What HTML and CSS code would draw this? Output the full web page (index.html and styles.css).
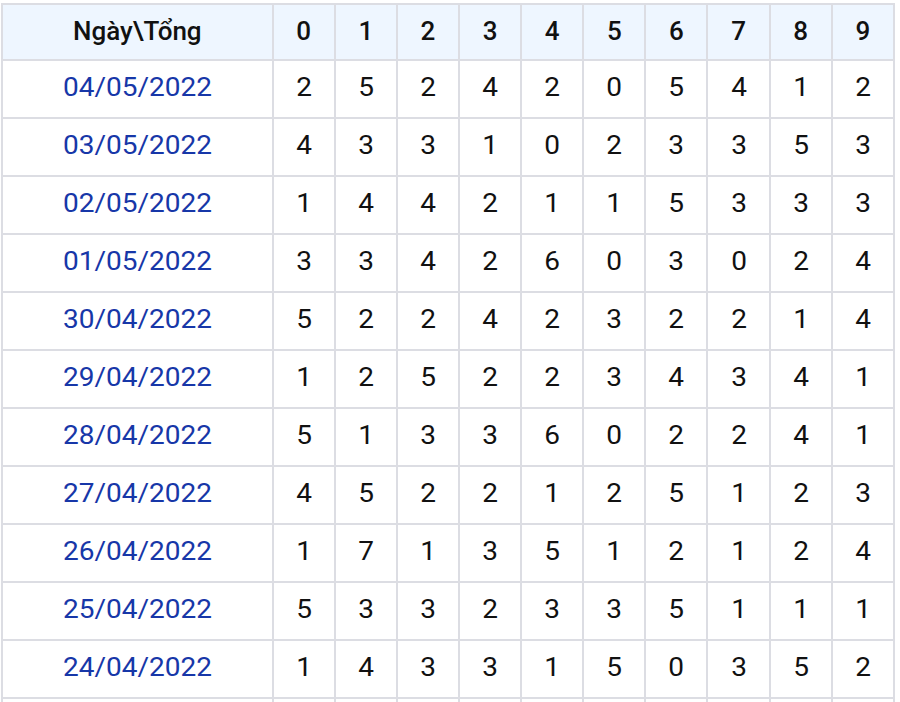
FILE: index.html
```html
<!DOCTYPE html>
<html>
<head>
<meta charset="utf-8">
<link rel="stylesheet" href="styles.css">
</head>
<body>
<table class="stats">
<colgroup><col class="c-date"><col span="10" class="c-num"></colgroup>
<thead>
<tr><th><span class="t">Ngày\Tổng</span></th><th><span class="t">0</span></th><th><span class="t">1</span></th><th><span class="t">2</span></th><th><span class="t">3</span></th><th><span class="t">4</span></th><th><span class="t">5</span></th><th><span class="t">6</span></th><th><span class="t">7</span></th><th><span class="t">8</span></th><th><span class="t">9</span></th></tr>
</thead>
<tbody>
<tr><td class="date"><span class="t">04/05/2022</span></td><td><span class="t">2</span></td><td><span class="t">5</span></td><td><span class="t">2</span></td><td><span class="t">4</span></td><td><span class="t">2</span></td><td><span class="t">0</span></td><td><span class="t">5</span></td><td><span class="t">4</span></td><td><span class="t">1</span></td><td><span class="t">2</span></td></tr>
<tr><td class="date"><span class="t">03/05/2022</span></td><td><span class="t">4</span></td><td><span class="t">3</span></td><td><span class="t">3</span></td><td><span class="t">1</span></td><td><span class="t">0</span></td><td><span class="t">2</span></td><td><span class="t">3</span></td><td><span class="t">3</span></td><td><span class="t">5</span></td><td><span class="t">3</span></td></tr>
<tr><td class="date"><span class="t">02/05/2022</span></td><td><span class="t">1</span></td><td><span class="t">4</span></td><td><span class="t">4</span></td><td><span class="t">2</span></td><td><span class="t">1</span></td><td><span class="t">1</span></td><td><span class="t">5</span></td><td><span class="t">3</span></td><td><span class="t">3</span></td><td><span class="t">3</span></td></tr>
<tr><td class="date"><span class="t">01/05/2022</span></td><td><span class="t">3</span></td><td><span class="t">3</span></td><td><span class="t">4</span></td><td><span class="t">2</span></td><td><span class="t">6</span></td><td><span class="t">0</span></td><td><span class="t">3</span></td><td><span class="t">0</span></td><td><span class="t">2</span></td><td><span class="t">4</span></td></tr>
<tr><td class="date"><span class="t">30/04/2022</span></td><td><span class="t">5</span></td><td><span class="t">2</span></td><td><span class="t">2</span></td><td><span class="t">4</span></td><td><span class="t">2</span></td><td><span class="t">3</span></td><td><span class="t">2</span></td><td><span class="t">2</span></td><td><span class="t">1</span></td><td><span class="t">4</span></td></tr>
<tr><td class="date"><span class="t">29/04/2022</span></td><td><span class="t">1</span></td><td><span class="t">2</span></td><td><span class="t">5</span></td><td><span class="t">2</span></td><td><span class="t">2</span></td><td><span class="t">3</span></td><td><span class="t">4</span></td><td><span class="t">3</span></td><td><span class="t">4</span></td><td><span class="t">1</span></td></tr>
<tr><td class="date"><span class="t">28/04/2022</span></td><td><span class="t">5</span></td><td><span class="t">1</span></td><td><span class="t">3</span></td><td><span class="t">3</span></td><td><span class="t">6</span></td><td><span class="t">0</span></td><td><span class="t">2</span></td><td><span class="t">2</span></td><td><span class="t">4</span></td><td><span class="t">1</span></td></tr>
<tr><td class="date"><span class="t">27/04/2022</span></td><td><span class="t">4</span></td><td><span class="t">5</span></td><td><span class="t">2</span></td><td><span class="t">2</span></td><td><span class="t">1</span></td><td><span class="t">2</span></td><td><span class="t">5</span></td><td><span class="t">1</span></td><td><span class="t">2</span></td><td><span class="t">3</span></td></tr>
<tr><td class="date"><span class="t">26/04/2022</span></td><td><span class="t">1</span></td><td><span class="t">7</span></td><td><span class="t">1</span></td><td><span class="t">3</span></td><td><span class="t">5</span></td><td><span class="t">1</span></td><td><span class="t">2</span></td><td><span class="t">1</span></td><td><span class="t">2</span></td><td><span class="t">4</span></td></tr>
<tr><td class="date"><span class="t">25/04/2022</span></td><td><span class="t">5</span></td><td><span class="t">3</span></td><td><span class="t">3</span></td><td><span class="t">2</span></td><td><span class="t">3</span></td><td><span class="t">3</span></td><td><span class="t">5</span></td><td><span class="t">1</span></td><td><span class="t">1</span></td><td><span class="t">1</span></td></tr>
<tr><td class="date"><span class="t">24/04/2022</span></td><td><span class="t">1</span></td><td><span class="t">4</span></td><td><span class="t">3</span></td><td><span class="t">3</span></td><td><span class="t">1</span></td><td><span class="t">5</span></td><td><span class="t">0</span></td><td><span class="t">3</span></td><td><span class="t">5</span></td><td><span class="t">2</span></td></tr>
<tr class="tail"><td class="date"></td><td></td><td></td><td></td><td></td><td></td><td></td><td></td><td></td><td></td><td></td></tr>
</tbody>
</table>
</body>
</html>
```
FILE: styles.css
```css
html, body {
  margin: 0;
  padding: 0;
  background: #ffffff;
  overflow: hidden;
}
body {
  padding: 3px 0 0 1px;
  font-family: Roboto, "Liberation Sans", sans-serif;
}
.stats {
  border-collapse: collapse;
  table-layout: fixed;
  width: 894px;
}
.c-date { width: 270px; }
.c-num { width: 62px; }
.stats th, .stats td {
  border: 2px solid #dcdde3;
  height: 56px;
  padding: 0;
  text-align: center;
  vertical-align: middle;
  font-size: 25px;
  color: #111111;
  line-height: 1;
}
.stats th {
  height: 54px;
  background: #eef6ff;
  font-weight: 500;
  font-size: 26px;
}
.stats th .t {
  display: inline-block;
  margin-bottom: 2px;
}
.stats td.date {
  color: #1737a8;
}
.stats td .t {
  display: inline-block;
  margin-bottom: 3px;
  transform: scaleX(1.12);
}
```
